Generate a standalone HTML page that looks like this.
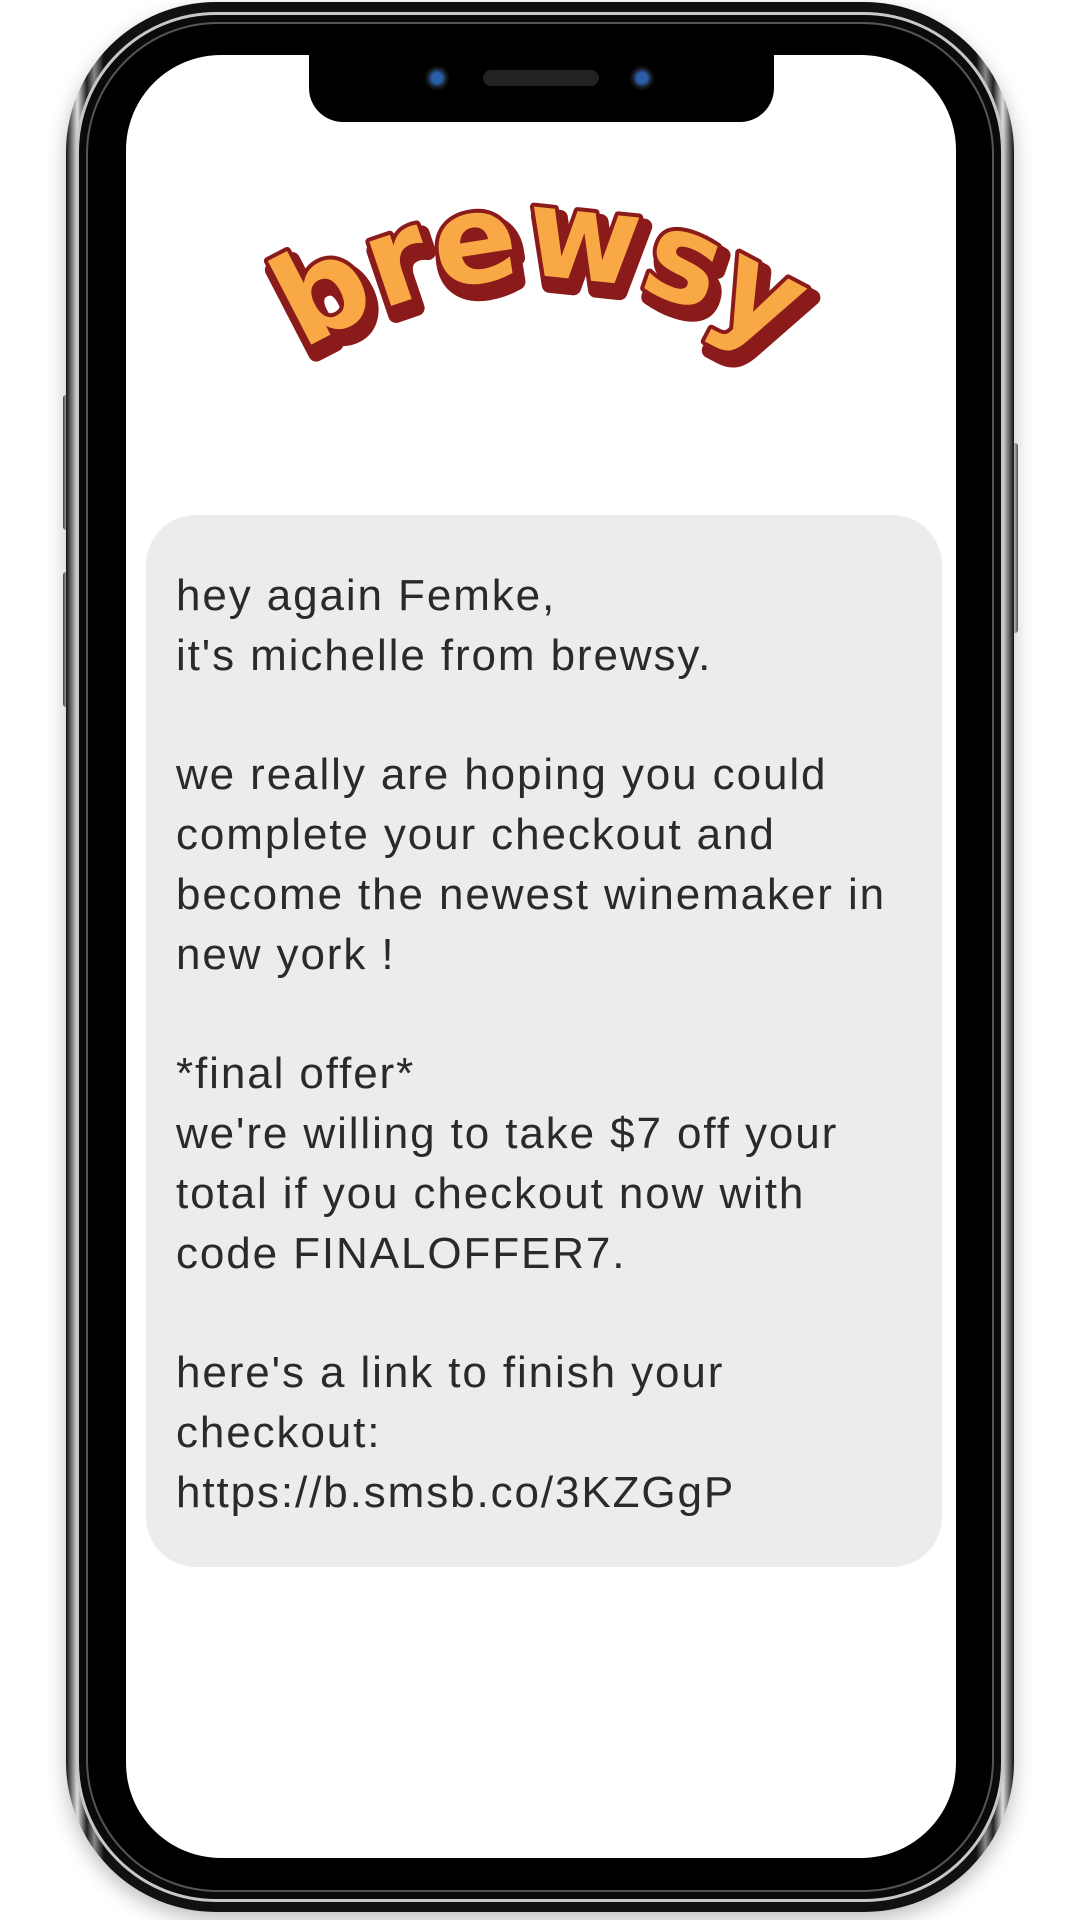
<!DOCTYPE html>
<html><head><meta charset="utf-8"><style>
html,body{margin:0;padding:0;background:#fff;width:1080px;height:1920px;overflow:hidden;position:relative}
.abs{position:absolute}
.outer{left:66px;top:2px;width:948px;height:1910px;border-radius:150px;background:linear-gradient(90deg,#111 0%,#ddd 1.2%,#222 2.2%,#888 3%,#111 4%,#111 96%,#888 97%,#222 97.8%,#ddd 98.8%,#111 100%);box-shadow:0 8px 20px rgba(0,0,0,.25)}
.ring{left:76px;top:12px;width:928px;height:1890px;border-radius:140px;background:#0a0a0a;border:3px solid #c8c8c8;box-sizing:border-box}
.ring2{left:86px;top:22px;width:908px;height:1870px;border-radius:132px;background:#000;border:2px solid #555;box-sizing:border-box}
.screen{left:126px;top:55px;width:830px;height:1803px;border-radius:95px;background:#fff;overflow:hidden}
.notch{left:309px;top:40px;width:465px;height:82px;background:#000;border-radius:0 0 34px 34px}
.btn{background:linear-gradient(90deg,#444,#ddd,#555);border-radius:3px}
.bubble{left:146px;top:515px;width:796px;height:1052px;border-radius:50px;background:#ececec}
.txt{left:176px;top:566px;font-family:"Liberation Sans",sans-serif;font-size:44px;line-height:59.8px;color:#2a2a2a;white-space:pre;letter-spacing:1.9px}
</style></head><body>
<div class="abs btn" style="left:63px;top:395px;width:8px;height:135px"></div>
<div class="abs btn" style="left:63px;top:572px;width:8px;height:135px"></div>
<div class="abs btn" style="left:1010px;top:443px;width:8px;height:190px"></div>
<div class="abs outer"></div>
<div class="abs ring"></div>
<div class="abs ring2"></div>
<div class="abs screen"></div>
<div class="abs notch"></div>
<div class="abs" style="left:425px;top:66px;width:24px;height:24px;border-radius:50%;background:radial-gradient(circle,#2a5fa8 0 30%,#111 60%)"></div>
<div class="abs" style="left:630px;top:66px;width:24px;height:24px;border-radius:50%;background:radial-gradient(circle,#2a5fa8 0 30%,#111 60%)"></div>
<div class="abs" style="left:483px;top:70px;width:116px;height:16px;border-radius:8px;background:#222"></div>
<svg class="abs" style="left:0;top:0" width="1080" height="460">
<defs><path id="arc" d="M240 395 Q540 160 840 395"/></defs>
<text font-family="DejaVu Sans,sans-serif" font-weight="bold" font-size="124" fill="#8b1a1a" stroke="#8b1a1a" stroke-width="16" stroke-linejoin="round" transform="translate(5,9)"><textPath href="#arc" startOffset="50%" text-anchor="middle">brewsy</textPath></text>
<text font-family="DejaVu Sans,sans-serif" font-weight="bold" font-size="124" fill="#f8a945" stroke="#8b1a1a" stroke-width="8" paint-order="stroke" stroke-linejoin="round"><textPath href="#arc" startOffset="50%" text-anchor="middle">brewsy</textPath></text>
</svg>
<div class="abs bubble"></div>
<div class="abs txt">hey again Femke,
it's michelle from brewsy.

we really are hoping you could
complete your checkout and
become the newest winemaker in
new york !

*final offer*
we're willing to take $7 off your
total if you checkout now with
code FINALOFFER7.

here's a link to finish your
checkout:
https://b.smsb.co/3KZGgP</div>
</body></html>
